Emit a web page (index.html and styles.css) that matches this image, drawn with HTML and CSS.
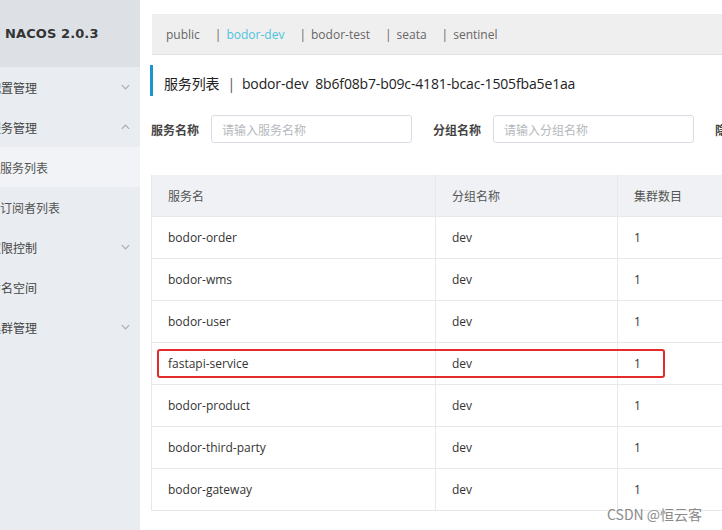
FILE: index.html
```html
<!DOCTYPE html>
<html lang="zh">
<head>
<meta charset="utf-8">
<title>Nacos</title>
<link rel="stylesheet" href="styles.css">
</head>
<body>
<div class="app">
  <aside class="sidebar">
    <div class="logo">NACOS 2.0.3</div>
    <ul class="menu">
      <li class="item"><span class="label">配置管理</span><svg class="chev" viewBox="0 0 10 6"><polyline points="1,1 5,5 9,1"/></svg></li>
      <li class="item"><span class="label">服务管理</span><svg class="chev" viewBox="0 0 10 6"><polyline points="1,5 5,1 9,5"/></svg></li>
      <li class="item sub active"><span class="label">服务列表</span></li>
      <li class="item sub"><span class="label">订阅者列表</span></li>
      <li class="item"><span class="label">权限控制</span><svg class="chev" viewBox="0 0 10 6"><polyline points="1,1 5,5 9,1"/></svg></li>
      <li class="item"><span class="label">命名空间</span></li>
      <li class="item"><span class="label">集群管理</span><svg class="chev" viewBox="0 0 10 6"><polyline points="1,1 5,5 9,1"/></svg></li>
    </ul>
  </aside>
  <main class="main">
    <div class="ns-bar">
      <span class="ns">public</span>
      <span class="ns"><span class="sep">|</span><span class="on">bodor-dev</span></span>
      <span class="ns"><span class="sep">|</span>bodor-test</span>
      <span class="ns"><span class="sep">|</span>seata</span>
      <span class="ns"><span class="sep">|</span>sentinel</span>
    </div>
    <div class="title"><span>服务列表</span><span class="bar">|</span><span>bodor-dev&nbsp; 8b6f08b7-b09c-4181-bcac-1505fba5e1aa</span></div>
    <div class="filters">
      <label class="f-label">服务名称</label>
      <div class="input">请输入服务名称</div>
      <label class="f-label">分组名称</label>
      <div class="input">请输入分组名称</div>
      <label class="f-label">隐藏空集群</label>
    </div>
    <div class="table">
      <div class="row head"><div class="c c1">服务名</div><div class="c c2">分组名称</div><div class="c c3">集群数目</div></div>
      <div class="row"><div class="c c1">bodor-order</div><div class="c c2">dev</div><div class="c c3">1</div></div>
      <div class="row"><div class="c c1">bodor-wms</div><div class="c c2">dev</div><div class="c c3">1</div></div>
      <div class="row"><div class="c c1">bodor-user</div><div class="c c2">dev</div><div class="c c3">1</div></div>
      <div class="row"><div class="c c1">fastapi-service</div><div class="c c2">dev</div><div class="c c3">1</div></div>
      <div class="row"><div class="c c1">bodor-product</div><div class="c c2">dev</div><div class="c c3">1</div></div>
      <div class="row"><div class="c c1">bodor-third-party</div><div class="c c2">dev</div><div class="c c3">1</div></div>
      <div class="row"><div class="c c1">bodor-gateway</div><div class="c c2">dev</div><div class="c c3">1</div></div>
    </div>
  </main>
</div>
<div class="highlight"></div>
<div class="watermark">CSDN @恒云客</div>
</body>
</html>
```
FILE: styles.css
```css
html, body {
  margin: 0;
  padding: 0;
}
body {
  width: 722px;
  height: 530px;
  overflow: hidden;
  position: relative;
  background: #fff;
  font-family: "Open Sans", "Noto Sans CJK SC", sans-serif;
  color: #333;
}
.app {
  display: flex;
  height: 530px;
}
.sidebar {
  width: 140px;
  flex: 0 0 140px;
  background: #e9ecf0;
  overflow: hidden;
}
.logo {
  height: 67px;
  background: #dde1e6;
  display: flex;
  align-items: center;
  padding-left: 5px;
  font-family: "DejaVu Sans", sans-serif;
  font-weight: bold;
  font-size: 13px;
  color: #333;
  letter-spacing: 0.1px;
}
.menu {
  list-style: none;
  margin: 0;
  padding: 0;
}
.item {
  height: 40px;
  display: flex;
  align-items: center;
  justify-content: space-between;
  padding-right: 10px;
  font-family: "Noto Sans CJK SC", sans-serif;
  font-size: 12px;
  color: #444;
}
.item .label {
  margin-left: -11px;
}
.item.sub .label {
  margin-left: 0;
  color: #555;
}
.item.active {
  background: #f1f3f6;
}
.chev {
  width: 9px;
  height: 6px;
  fill: none;
  stroke: #a8adb3;
  stroke-width: 1.3;
}
.main {
  flex: 1;
  padding: 14px 0 0 12px;
  min-width: 0;
  overflow: hidden;
}
.ns-bar {
  width: 760px;
  height: 41px;
  background: #efefef;
  border-bottom: 1px solid #e0e0e0;
  box-sizing: border-box;
  display: flex;
  align-items: center;
  padding-left: 14px;
  padding-top: 1px;
  font-size: 12px;
  color: #666;
  white-space: nowrap;
}
.ns {
  margin-right: 6px;
}
.ns .sep {
  margin: 0 5px 0 9px;
}
.ns .on {
  color: #4cc3db;
}
.title {
  margin-top: 10px;
  margin-left: -2px;
  height: 31px;
  border-left: 3px solid #1a95c9;
  padding-left: 11px;
  padding-top: 5px;
  box-sizing: border-box;
  display: flex;
  align-items: center;
  white-space: pre;
  font-size: 14px;
  color: #222;
  letter-spacing: -0.15px;
}
.title .bar {
  margin: 0 7px 0 8px;
  color: #555;
}
.filters {
  margin-top: 19px;
  margin-left: -1px;
  display: flex;
  align-items: center;
  height: 28px;
  white-space: nowrap;
}
.f-label {
  flex-shrink: 0;
  font-family: "Noto Sans CJK SC", sans-serif;
  font-weight: bold;
  font-size: 12px;
  color: #444;
  margin-right: 12px;
}
.input {
  flex-shrink: 0;
  width: 201px;
  height: 28px;
  box-sizing: border-box;
  border: 1px solid #d9dde3;
  border-radius: 3px;
  display: flex;
  align-items: center;
  padding-left: 10px;
  font-family: "Noto Sans CJK SC", sans-serif;
  font-size: 12px;
  color: #b5b8bd;
  margin-right: 21px;
}
.table {
  margin-top: 32px;
  margin-left: -1px;
  width: 760px;
  border-left: 1px solid #e6e8eb;
}
.row {
  display: flex;
  height: 42px;
  border-bottom: 1px solid #e6e8eb;
  box-sizing: border-box;
  font-size: 12px;
  color: #333;
}
.row.head {
  background: #eff1f4;
  color: #555;
  font-family: "Noto Sans CJK SC", sans-serif;
}
.c {
  display: flex;
  align-items: center;
  padding-left: 16px;
  box-sizing: border-box;
  border-right: 1px solid #e6e8eb;
}
.c1 { width: 284px; }
.c2 { width: 182px; }
.c3 { flex: 1; }
.highlight {
  position: absolute;
  left: 157px;
  top: 349px;
  width: 508px;
  height: 29px;
  box-sizing: border-box;
  border: 2px solid #e42a2a;
  border-radius: 3px;
}
.watermark {
  position: absolute;
  left: 607px;
  top: 504px;
  font-family: "Noto Sans CJK SC", sans-serif;
  font-size: 14px;
  color: #8a8a8a;
  text-shadow: 0 0 2px #fff;
}
```
